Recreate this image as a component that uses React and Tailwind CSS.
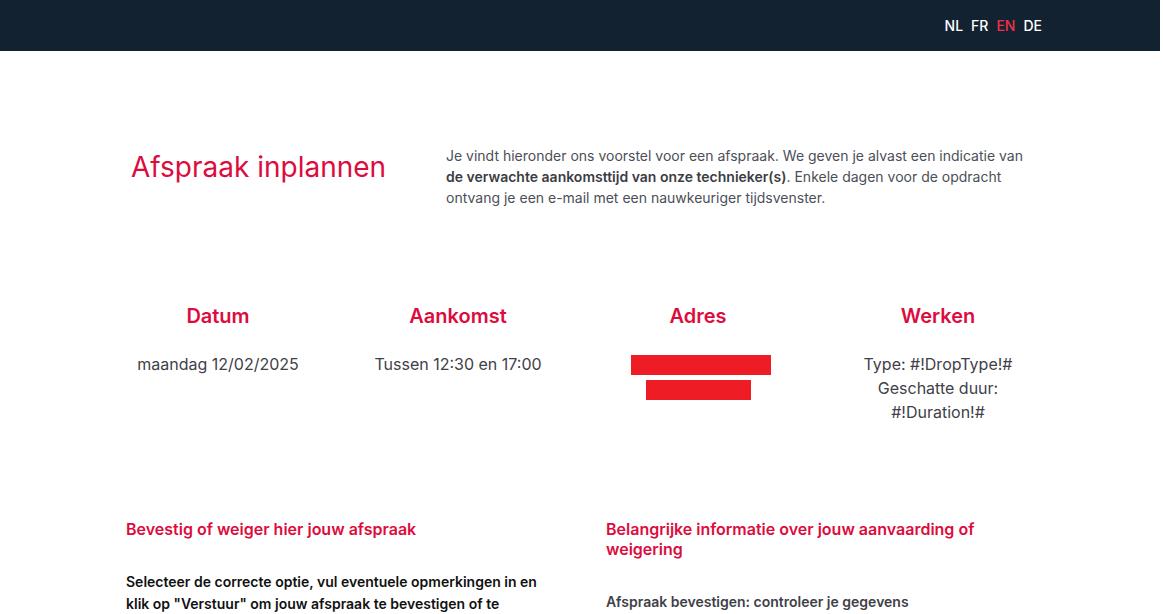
export default function App() {
  const red = 'text-[#dc0c3e]';
  return (
    <div className="w-[1160px] min-h-[614px] bg-white font-['Inter',sans-serif]">
      {/* Header */}
      <header className="h-[51px] bg-[#132231] flex items-center justify-end pr-[118px]">
        <nav className="flex gap-[8px] text-[14px] font-medium leading-none">
          <a className="text-white">NL</a>
          <a className="text-white">FR</a>
          <a className="text-[#f0304a]">EN</a>
          <a className="text-white">DE</a>
        </nav>
      </header>

      {/* Intro */}
      <section className="flex pt-[94px] pl-[131px]">
        <h1 className={`w-[315px] text-[28px] font-normal leading-[34px] pt-[5px] ${red}`}>
          Afspraak inplannen
        </h1>
        <p className="w-[590px] text-[14px] leading-[21px] text-[#4b4f58]">
          Je vindt hieronder ons voorstel voor een afspraak. We geven je alvast een indicatie van{' '}
          <strong className="font-semibold text-[#3a3d44]">de verwachte aankomsttijd van onze technieker(s)</strong>. Enkele
          dagen voor de opdracht ontvang je een e-mail met een nauwkeuriger tijdsvenster.
        </p>
      </section>

      {/* Details */}
      <section className="ml-[98px] w-[960px] mt-[94px] grid grid-cols-4 text-center">
        <div>
          <h2 className={`text-[20px] font-semibold leading-[28px] ${red}`}>Datum</h2>
          <p className="mt-[22px] text-[16px] leading-[24px] text-[#3f4148]">maandag 12/02/2025</p>
        </div>
        <div>
          <h2 className={`text-[20px] font-semibold leading-[28px] ${red}`}>Aankomst</h2>
          <p className="mt-[22px] text-[16px] leading-[24px] text-[#3f4148]">Tussen 12:30 en 17:00</p>
        </div>
        <div>
          <h2 className={`text-[20px] font-semibold leading-[28px] ${red}`}>Adres</h2>
          <div className="mt-[25px] flex flex-col items-center gap-[5px]">
            <div className="w-[140px] h-[20px] bg-[#ee1c25] ml-[5px]" />
            <div className="w-[105px] h-[20px] bg-[#ee1c25] ml-[1px]" />
          </div>
        </div>
        <div>
          <h2 className={`text-[20px] font-semibold leading-[28px] ${red}`}>Werken</h2>
          <p className="mt-[22px] text-[16px] leading-[24px] text-[#3f4148] px-[40px]">
            Type: #!DropType!#
            <br />
            Geschatte duur: #!Duration!#
          </p>
        </div>
      </section>

      {/* Confirm */}
      <section className="ml-[126px] w-[912px] mt-[95px] grid grid-cols-2 gap-[48px]">
        <div>
          <h3 className={`text-[16px] font-semibold leading-[20px] ${red}`}>Bevestig of weiger hier jouw afspraak</h3>
          <p className="mt-[32px] text-[14px] font-semibold leading-[22px] text-[#111111] pr-[10px]">
            Selecteer de correcte optie, vul eventuele opmerkingen in en klik op "Verstuur" om jouw afspraak te bevestigen of te
            weigeren.
          </p>
        </div>
        <div>
          <h3 className={`text-[16px] font-semibold leading-[20px] ${red}`}>
            Belangrijke informatie over jouw aanvaarding of weigering
          </h3>
          <p className="mt-[32px] text-[14px] font-semibold leading-[22px] text-[#3f4148]">
            Afspraak bevestigen: controleer je gegevens
          </p>
        </div>
      </section>
    </div>
  );
}
